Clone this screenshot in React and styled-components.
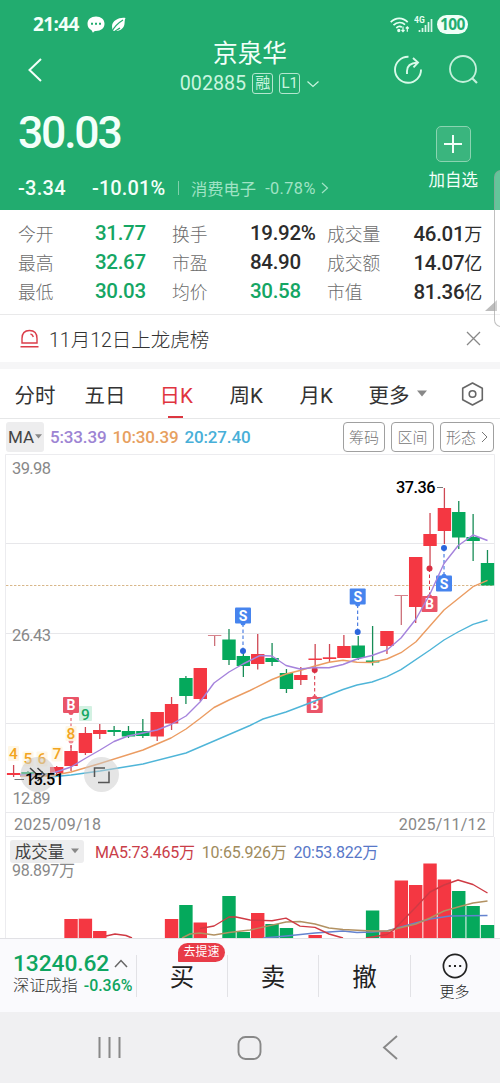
import React from 'react';
import styled, { createGlobalStyle } from 'styled-components';

const RED = '#f43742';
const GREEN = '#05a95c';

const Global = createGlobalStyle`
  * { box-sizing: border-box; }
  body {
    margin: 0;
    background: #fff;
    font-family: Roboto, "Noto Sans CJK SC", sans-serif;
    color: #333;
  }
  svg { display: block; flex: none; }
`;

const Screen = styled.div`
  position: relative;
  width: 500px;
  height: 1083px;
  display: flex;
  flex-direction: column;
  overflow: hidden;
  background: #fff;
  white-space: nowrap;
`;

const Header = styled.header`
  height: 210px;
  flex: none;
  background: #22ac6f;
  color: #f3fff9;
`;

const StatusBar = styled.div`
  height: 38px;
  padding: 12px 32px 0 33px;
  display: flex;
  align-items: flex-start;
  justify-content: space-between;
`;

const StatusGroup = styled.div`
  display: flex;
  align-items: center;
  height: 25px;
  gap: ${(p) => p.$gap}px;
`;

const Clock = styled.span`
  font: 700 19px/25px "Open Sans", sans-serif;
  letter-spacing: -0.6px;
  margin-right: 2px;
`;

const Battery = styled.span`
  width: 31px;
  height: 19px;
  border-radius: 10px;
  background: #effff7;
  color: #22ac6f;
  font: 700 15.5px/19px "Open Sans", sans-serif;
  letter-spacing: -0.6px;
  text-align: center;
`;

const TitleBar = styled.div`
  height: 62px;
  display: grid;
  grid-template-columns: 148px 1fr 148px;
`;

const BackSlot = styled.div`
  padding: 19px 0 0 26px;
`;

const TitleBlock = styled.div`
  display: flex;
  flex-direction: column;
  align-items: center;
`;

const StockName = styled.h1`
  margin: 0;
  padding-top: 1px;
  font-size: 24.7px;
  font-weight: 400;
  line-height: 30px;
`;

const CodeRow = styled.div`
  display: flex;
  align-items: center;
  gap: 6px;
  height: 29px;
  font-size: 19.7px;
  color: #c9f5df;
`;

const Tag = styled.span`
  width: 21px;
  height: 21px;
  border: 1px solid #b4e6cf;
  border-radius: 3px;
  font-size: 15px;
  line-height: 19px;
  display: flex;
  justify-content: center;
`;

const TitleActions = styled.div`
  display: flex;
  gap: 26px;
  padding: 17px 0 0 41px;
`;

const PriceArea = styled.div`
  display: flex;
  justify-content: space-between;
  height: 110px;
  padding: 8px 22px 0 18px;
`;

const PriceBlock = styled.div`
  display: flex;
  flex-direction: column;
`;

const Price = styled.div`
  font-size: 44.5px;
  font-weight: 500;
  line-height: 50px;
  letter-spacing: -2.2px;
`;

const ChangeRow = styled.div`
  display: flex;
  align-items: center;
  height: 24px;
  margin-top: 18px;
  font-size: 20px;
  font-weight: 500;
`;

const Change = styled.span`
  width: ${(p) => p.$w}px;
  letter-spacing: ${(p) => p.$ls}px;
`;

const Sector = styled.span`
  display: flex;
  align-items: center;
  height: 14px;
  padding-left: 12px;
  border-left: 1px solid #7fd0ab;
  color: #a0e3c5;
  font-size: 16.3px;
  font-weight: 400;
  gap: 9px;
`;

const SectorPct = styled.span`
  display: flex;
  align-items: center;
  gap: 5px;
  letter-spacing: 0.4px;
`;

const AddWatch = styled.div`
  display: flex;
  flex-direction: column;
  align-items: center;
  gap: 7px;
  padding-top: 18px;
  font-size: 16.5px;
  line-height: 24px;
`;

const AddBox = styled.div`
  width: 35px;
  height: 36px;
  border: 1px solid #8bd4b1;
  border-radius: 5px;
  background: #3ab57e;
  display: flex;
  align-items: center;
  justify-content: center;
`;

const Stats = styled.section`
  height: 105px;
  flex: none;
  padding: 8px 18px 0 18px;
  display: grid;
  grid-template-columns: 77px 77px 78px 77px 53px 102px;
  grid-auto-rows: 29.3px;
  align-items: center;
  border-bottom: 1px solid #e9e9ea;
`;

const StatLabel = styled.span`
  font-size: 17.8px;
  font-weight: 300;
  color: #6c6c6c;
`;

const StatValue = styled.span`
  font-size: 20.5px;
  font-weight: 500;
  letter-spacing: -0.3px;
  color: ${(p) => (p.$up ? '#15a664' : '#2c2c2c')};
  text-align: ${(p) => (p.$end ? 'right' : 'left')};
`;

const Unit = styled.span`
  font-size: 18px;
  font-weight: 400;
`;

const Notice = styled.section`
  height: 47px;
  flex: none;
  display: flex;
  align-items: center;
  padding: 0 19px 0 20px;
`;

const NoticeText = styled.span`
  flex: 1;
  margin-left: 10px;
  font-size: 19.5px;
  font-weight: 300;
  color: #333;
`;

const Gap = styled.div`
  height: 7px;
  flex: none;
  background: #f6f6f7;
`;

const Tabs = styled.nav`
  height: 50px;
  flex: none;
  display: grid;
  grid-template-columns: 70px 75px 70px 70px 69px 92px 24px;
  padding-left: 14.5px;
  border-bottom: 1px solid #e6e7e8;
`;

const Tab = styled.div`
  display: flex;
  align-items: center;
  gap: 7px;
  height: 49px;
  font-size: 20.5px;
  color: ${(p) => (p.$active ? '#e0343f' : '#333')};
`;

const ActiveTab = styled(Tab)`
  width: 34px;
  background: linear-gradient(#dc3640, #dc3640) 8px 47px / 15px 2px no-repeat;
`;

const MaRow = styled.div`
  height: 35px;
  flex: none;
  display: flex;
  align-items: center;
  padding: 0 6px;
`;

const Picker = styled.div`
  height: ${(p) => p.$h}px;
  width: ${(p) => p.$w}px;
  border-radius: 3px;
  background: #ededee;
  display: flex;
  align-items: center;
  justify-content: center;
  gap: ${(p) => p.$gap}px;
  font-size: ${(p) => p.$size}px;
  color: #444;
`;

const MaList = styled.div`
  flex: 1;
  display: flex;
  gap: 6px;
  padding-left: 6px;
  font-size: 17px;
  font-weight: 500;
  letter-spacing: -0.15px;
`;

const MaValue = styled.span`
  color: ${(p) => p.$c};
`;

const ToolButtons = styled.div`
  display: flex;
  gap: 6px;
`;

const ToolButton = styled.div`
  height: 30px;
  width: ${(p) => p.$w}px;
  border: 1px solid #a0a0a0;
  border-radius: 4px;
  display: flex;
  align-items: center;
  justify-content: center;
  gap: 5px;
  font-size: 15px;
  font-weight: 300;
  color: #777;
`;

const Dates = styled.div`
  height: 25px;
  flex: none;
  margin: 0 6px 0 5px;
  padding: 0 7px 0 8px;
  display: flex;
  align-items: center;
  justify-content: space-between;
  border: 1px solid #e9e9ec;
  font-size: 16px;
  letter-spacing: 0.2px;
  color: #888;
`;

const VolumePanel = styled.section`
  height: 101px;
  flex: none;
  display: flex;
  flex-direction: column;
`;

const VolumeHead = styled.div`
  display: flex;
  align-items: center;
  height: 25px;
  padding: 3px 0 0 10px;
`;

const VolumeMas = styled.div`
  display: flex;
  gap: 7px;
  padding-left: 11px;
  font-size: 16px;
  letter-spacing: -0.25px;
`;

const VolumeSvg = styled.svg`
  overflow: visible;
`;

const TradeBar = styled.section`
  position: relative;
  height: 74px;
  flex: none;
  display: grid;
  grid-template-columns: 136px 91px 91px 92px 90px;
  align-items: center;
  background: #fafafd;
  border-top: 1px solid #e1e1e5;
`;

const IndexCell = styled.div`
  height: 52px;
  padding: 2px 0 0 13px;
  display: flex;
  flex-direction: column;
`;

const IndexValue = styled.div`
  display: flex;
  align-items: center;
  gap: 5px;
  font-size: 22.8px;
  font-weight: 500;
  line-height: 24px;
  letter-spacing: -0.1px;
  color: #0fa561;
`;

const IndexName = styled.div`
  display: flex;
  align-items: center;
  gap: 6px;
  font-size: 16.2px;
  line-height: 20px;
  font-weight: 300;
  color: #333;
`;

const IndexPct = styled.span`
  font-size: 15.9px;
  font-weight: 500;
  color: #0fa561;
`;

const TradeCell = styled.div`
  position: relative;
  height: 42px;
  display: flex;
  align-items: center;
  justify-content: center;
  border-left: 1px solid #e2e2e6;
  font-size: 24.5px;
  color: #222;
`;

const Promo = styled.span`
  position: absolute;
  left: 41px;
  top: -12px;
  width: 47px;
  height: 19px;
  border-radius: 10px 10px 10px 1px;
  background: #e83c48;
  color: #fff;
  font-size: 12px;
  line-height: 18px;
  text-align: center;
`;

const MoreCell = styled(TradeCell)`
  flex-direction: column;
  gap: 3px;
  padding: 3px 2px 0 0;
  font-size: 15px;
  line-height: 20px;
  font-weight: 300;
`;

const SystemNav = styled.footer`
  flex: 1;
  background: #f0f0f2;
  display: grid;
  grid-template-columns: 219px 61px 220px;
  align-items: center;
  justify-items: center;
`;

const EdgePanel = styled.div`
  position: absolute;
  left: 494px;
  top: 170px;
  width: 20px;
  height: 157px;
  border: 1px solid rgba(150, 150, 150, 0.6);
  border-radius: 7px;
  background: rgba(255, 255, 255, 0.3);
`;

const CornerMark = styled.svg`
  position: absolute;
  left: 485px;
  top: 300px;
`;

const Stroke = ({ w, h, d, c = 'currentColor', sw = 1.5 }) => (
  <svg width={w} height={h} viewBox={`0 0 ${w} ${h}`} fill="none" stroke={c} strokeWidth={sw}>
    <path d={d} />
  </svg>
);

const Caret = ({ w = 11, c = '#888' }) => (
  <svg width={w} height={w * 0.65} viewBox="0 0 11 7"><path d="M0 .5h11L5.5 7z" fill={c} /></svg>
);

const stats = [
  ['今开', '31.77', true, '换手', '19.92%', false, '成交量', '46.01', '万'],
  ['最高', '32.67', true, '市盈', '84.90', false, '成交额', '14.07', '亿'],
  ['最低', '30.03', true, '均价', '30.58', true, '市值', '81.36', '亿'],
];

const STEP = 14.36;
const cx = (i) => 13.6 + STEP * i;

// [body top, body bottom, high, low, kind]: 0 falling, 1 rising, 2 flat at limit
const candles = [
  [773, 775, 765, 777, 1], [772, 775, 771, 776, 0], [773, 776, 771, 777, 0], [767, 773, 766, 774, 1],
  [751, 766, 745, 771, 1], [733, 753, 727, 755, 1], [730, 734, 724, 739, 1], [730, 732, 726, 736, 0],
  [731, 736.5, 726, 738, 0], [731, 736, 719, 738, 0], [712, 736.5, 712, 741, 1], [704, 723.5, 697, 730, 1],
  [678, 696, 676, 704, 0], [668, 699, 668, 701, 1], [635, 636, 635, 646, 2], [639.5, 660, 629, 665, 0],
  [656, 666, 652, 677, 0], [654, 664, 634, 669.5, 1], [658, 662, 643, 666, 0], [673, 689, 669, 693, 0],
  [675, 680, 667, 685, 1], [658.5, 660, 644, 668, 1], [657.3, 659, 644, 662, 1], [646, 658, 635, 658, 1],
  [645.5, 658, 636, 660, 0], [660.5, 662.5, 626, 665.5, 0], [631, 646, 631, 654, 1], [595, 596, 595, 625, 2],
  [557, 607, 557, 623, 1], [534, 546, 513, 568, 1], [508, 531, 488, 544, 1], [512, 537.5, 501, 549, 0],
  [537, 541, 514, 561, 0], [563, 585.5, 550, 585, 0],
];

const ma5 = '20,775 50,774 71,767 86,758 100,750 114,741.5 128,736 143,733 157,730 171,724.5 186,716 200,702 214,683 229,672 243,664 250,660.5 260,655.5 272,656 286,665.5 300,669 315,667.5 329,667.7 343,664.5 357,659 372,655.5 387,650 401,638 416,619 430,594 444,563.5 458,545.7 473,535 487.5,540.5';
const ma10 = '20,776 50,776 71,772 100,763.5 143,750 171,738 186,729 200,718.5 214,707.5 229,700 250,690.5 272,679.5 286,674 300,670.5 315,666 329,662.3 343,660.3 357,662.3 372,662.5 387,659 401,652.7 416,641.7 444,610 473,586.7 487.5,580.3';
const ma20 = '50,777 71,775 100,771 143,764 186,753 214,741 250,725.5 263,719 286,712 315,701 329,695 343,689.5 357,685 372,682 387,676.7 401,669.7 430,650 444,640 458,632 473,624.3 487.5,620';

// trade marks: [x, label top, dot y, letter]
const marks = [
  [71, 697, null, 'B'],
  [243, 607.5, 651, 'S'],
  [357.7, 588.5, 632, 'S'],
  [314.7, 697, 670, 'B'],
  [429.5, 596, 568.5, 'B'],
  [444, 575.5, 548, 'S'],
];

const counts = [[13.5, 753, '4'], [28, 758.5, '5'], [42, 758.5, '6'], [57, 753.5, '7'], [71, 733, '8']];

const volumes = {
  4: [919, 1], 5: [918.7, 1], 6: [931, 1], 11: [919, 1], 12: [905, 0], 13: [922.5, 1], 15: [896, 0],
  16: [932, 0], 17: [913, 1], 18: [924, 0], 19: [928, 0], 21: [935, 1], 25: [910.5, 0], 26: [931.5, 1],
  27: [880.5, 1], 28: [885, 1], 29: [863.5, 1], 30: [879.5, 1], 31: [891, 0], 32: [906, 0], 33: [925, 0],
};

const Mark = ({ x, top, dot, letter }) => {
  const fill = letter === 'B' ? '#ea5468' : '#4684ee';
  const ink = letter === 'B' ? '#d92f42' : '#2b66dc';
  const below = dot !== null && dot < top;
  return (
    <g>
      {dot !== null && (
        <>
          <path d={`M${x} ${dot}V${below ? top : top + 16}`} stroke={ink} strokeDasharray="3.5 2.5" />
          <circle cx={x} cy={dot} r="3" fill={ink} />
        </>
      )}
      <circle cx={x} cy={below ? top + 0.8 : top + 15.4} r="2.5" fill={fill} />
      <rect x={x - 8} y={top} width="16" height="16" rx="1" fill={fill} />
      <text x={x} y={top + 13} fontSize="14" fontWeight="700" fill="#fff" textAnchor="middle">{letter}</text>
    </g>
  );
};

const PriceChart = () => (
  <svg width="500" height="358" viewBox="0 454 500 358" fontFamily="Roboto, sans-serif">
    <path d="M5.5 812V454.5H494.5V812" fill="none" stroke="#ececef" />
    <path d="M6 543.5H494M6 633.5H494M6 723.5H494" stroke="#e7e7ea" />
    <path d="M6 585.5H494" stroke="#d8b78a" strokeDasharray="2.4 1.6" />
    {candles.map(([t, b, h, l, k], i) => {
      const c = k === 0 ? GREEN : k === 1 ? RED : '#d6838c';
      const wick = k === 0 ? '#178c56' : k === 1 ? '#cf4854' : '#cc7079';
      return (
        <g key={i}>
          <path d={`M${cx(i)} ${h}V${l}`} stroke={wick} strokeWidth="1.3" />
          <rect x={cx(i) - 6.7} y={t} width="13.4" height={b - t} fill={c} />
        </g>
      );
    })}
    <g fontSize="16.5" fill="#888">
      <text x="12" y="474" textLength="39">39.98</text>
      <text x="12" y="640.5" textLength="39">26.43</text>
      <text x="12.5" y="804" textLength="38">12.89</text>
    </g>
    <path d="M71 718V748" stroke="#e0485a" strokeDasharray="3 2.5" />
    <circle cx="71" cy="741" r="2.5" fill="#f08b92" />
    <g fontSize="15.5" fontWeight="500" fill="#f2a51f" textAnchor="middle">
      {counts.map(([x, y, n]) => (
        <React.Fragment key={n}>
          <rect x={x - 5.5} y={y - 7} width="11" height="15" rx="1" fill="#fff6e2" fillOpacity="0.85" />
          <text x={x} y={y + 5.5}>{n}</text>
        </React.Fragment>
      ))}
    </g>
    <rect x="79" y="706" width="13" height="15" rx="1" fill="#d3f1e2" />
    <text x="85.3" y="719.5" fontSize="15.5" fontWeight="500" fill="#16a863" textAnchor="middle">9</text>
    {marks.map(([x, top, dot, letter], i) => <Mark key={i} x={x} top={top} dot={dot} letter={letter} />)}
    <g fill="none" strokeWidth="1.4" strokeLinejoin="round">
      <polyline points={ma20} stroke="#4fb5d8" />
      <polyline points={ma10} stroke="#eb9c62" />
      <polyline points={ma5} stroke="#a583dc" />
    </g>
    <circle cx="38" cy="774.5" r="17.5" fill="#ccc" fillOpacity="0.55" />
    <circle cx="101.5" cy="774.5" r="17.5" fill="#ccc" fillOpacity="0.5" />
    <path d="M30 768l7 6.5-7 6.5M37.5 768l7 6.5-7 6.5" fill="none" stroke="#444" strokeWidth="1.5" />
    <path d="M94.5 777v-9H105M98 782.5h11v-11" fill="none" stroke="#555" strokeWidth="1.5" />
    <path d="M14.5 779.5H24M437 487.5H443" stroke="#777" />
    <g fontSize="16.3" fill="#000" fontWeight="500">
      <text x="25" y="784.5" textLength="39">15.51</text>
      <text x="396" y="492.5" textLength="39.5">37.36</text>
    </g>
  </svg>
);

const VolumeChart = () => (
  <VolumeSvg width="500" height="76" viewBox="0 862 500 76" fontFamily='Roboto, "Noto Sans CJK SC", sans-serif'>
    <path d="M5.5 837V938M494.5 837V938" stroke="#ececef" />
    <text x="12" y="876" fontSize="16" fill="#888" textLength="63">98.897万</text>
    {Object.entries(volumes).map(([i, [top, up]]) => (
      <rect key={i} x={cx(Number(i)) - 6.7} y={top} width="13.4" height={938 - top} fill={up ? RED : GREEN} />
    ))}
    <g fill="none" strokeWidth="1.4" strokeLinejoin="round">
      <polyline points="263,938 286,936 315,933 343,931 357,932.5 372,932 387,931 401,927 430,919 450,916 487.5,915.5" stroke="#6483cf" />
      <polyline points="182,938 190,934 200,933 214,935 229,932.5 250,930 286,922 300,921.5 315,924 329,928 343,929.5 372,931 387,931 416,924 430,918 444,911 458,907 473,903 487.5,901" stroke="#b29162" />
      <path d="M106 936l9-2 11 1.5 6 2.5M200 928.500L214 926l15-9h7l14 3 22 .7 14-2.600 14 8 15 1.300 14 6.600 14 4M366 938l21-3.500 6-4 23-23.500 14-15 14-7 14-5 15 4.500 14.500 8.500" stroke="#cf3a44" />
    </g>
  </VolumeSvg>
);

export default function App() {
  return (
    <Screen>
      <Global />
      <Header>
        <StatusBar>
          <StatusGroup $gap={6}>
            <Clock>21:44</Clock>
            <svg width="18" height="17" viewBox="0 0 18 17">
              <path d="M9 .5c5 0 8.5 3 8.5 7.3S14 15 9 15c-1 0-2 0-3 1.7-.8-1-1-2-1.500-2.500C2 13 .5 11 .5 7.800.5 3.500 4 .5 9 .5z" fill="#fff" />
              <path d="M4 7.700h2M8 7.700h2M12 7.700h2" stroke="#22ac6f" strokeWidth="2" />
            </svg>
            <svg width="15" height="16" viewBox="0 0 15 16">
              <path d="M14.500 1C9 0 1.500 3 1 9c0 2 .5 4 1.500 5C7 14.500 12 13 13.300 8c.6-2.500 0-4.500 1.200-7z" fill="#fff" />
              <path d="M0 16C3 10 7 6 12 3M3 15c1.500-2 4-2.500 6-4" stroke="#22ac6f" strokeWidth="1.200" fill="none" />
            </svg>
          </StatusGroup>
          <StatusGroup $gap={4}>
            <svg width="20" height="16" viewBox="0 0 20 16" fill="none" stroke="#e5fff2" strokeWidth="1.700">
              <path d="M.7 5.200c5-5 12-5 17 0M3.500 8.200c3.500-3.500 8.500-3.500 11.500-.5M6.300 11c2-1.800 4-1.800 5.500-.8" />
              <circle cx="8.800" cy="13.500" r=".8" />
              <path d="M13 9.500v5M11.500 13l1.500 1.700 1.500-1.700M17.300 14.800V10M15.800 11.500l1.500-1.700 1.500 1.700" strokeWidth="1.200" />
            </svg>
            <svg width="19" height="17" viewBox="0 0 19 17">
              <text x="0" y="7" fontSize="8.500" fontWeight="700" fontFamily="Roboto, sans-serif" fill="#e5fff2">4G</text>
              <path d="M5.500 16v-2M8.500 16v-4M11.500 16V9M14.500 16V6M17.500 16V3" stroke="#d8f7e8" strokeWidth="1.700" />
            </svg>
            <Battery>100</Battery>
          </StatusGroup>
        </StatusBar>
        <TitleBar>
          <BackSlot><Stroke w={17} h={26} d="M15 2L3.500 13 15 24" sw={2} /></BackSlot>
          <TitleBlock>
            <StockName>京泉华</StockName>
            <CodeRow>
              <span>002885</span>
              <Tag>融</Tag>
              <Tag>L1</Tag>
              <Stroke w={14} h={8} d="M1.500 1.500L7 6.500l5.500-5" sw={1.200} />
            </CodeRow>
          </TitleBlock>
          <TitleActions>
            <svg width="30" height="30" viewBox="0 0 30 30" fill="none" stroke="#d8fae9" strokeWidth="1.900">
              <path d="M15.500 1.800A13 13 0 1 0 28 14.500" />
              <path d="M14 19v-3c0-6 4-8 10.500-8.500M20 3l5 4.500-4.500 4.800" />
            </svg>
            <svg width="32" height="30" viewBox="0 0 32 30" fill="none" stroke="#c4f0db" strokeWidth="1.800">
              <circle cx="14" cy="14" r="13" />
              <path d="M23 23l5 5" strokeWidth="2.200" />
            </svg>
          </TitleActions>
        </TitleBar>
        <PriceArea>
          <PriceBlock>
            <Price>30.03</Price>
            <ChangeRow>
              <Change $w={74} $ls={0.3}>-3.34</Change>
              <Change $w={86} $ls={0.1}>-10.01%</Change>
              <Sector>
                消费电子
                <SectorPct>-0.78%<Stroke w={8} h={12} d="M1 1l5.500 5L1 11" sw={1.200} /></SectorPct>
              </Sector>
            </ChangeRow>
          </PriceBlock>
          <AddWatch>
            <AddBox><Stroke w={18} h={18} d="M9 0v18M0 9h18" sw={2} /></AddBox>
            加自选
          </AddWatch>
        </PriceArea>
      </Header>

      <Stats>
        {stats.map(([l1, v1, u1, l2, v2, u2, l3, v3, unit]) => (
          <React.Fragment key={l1}>
            <StatLabel>{l1}</StatLabel>
            <StatValue $up={u1}>{v1}</StatValue>
            <StatLabel>{l2}</StatLabel>
            <StatValue $up={u2}>{v2}</StatValue>
            <StatLabel>{l3}</StatLabel>
            <StatValue $end>{v3}<Unit>{unit}</Unit></StatValue>
          </React.Fragment>
        ))}
      </Stats>

      <Notice>
        <Stroke w={19} h={19} c="#db3d49" sw={1.400} d="M2 14V9.500C2 4 5 1.500 9.500 1.500S17 4 17 9.500V14zM.5 17.800h18M10.500 5c1.500.3 2.500 1.500 2.800 3" />
        <NoticeText>11月12日上龙虎榜</NoticeText>
        <Stroke w={15} h={15} c="#888" sw={1.300} d="M1 1l13 13M14 1L1 14" />
      </Notice>
      <Gap />

      <Tabs>
        <Tab>分时</Tab>
        <Tab>五日</Tab>
        <ActiveTab $active>日K</ActiveTab>
        <Tab>周K</Tab>
        <Tab>月K</Tab>
        <Tab>更多<Caret w={10} /></Tab>
        <Tab>
          <svg width="23" height="24" viewBox="0 0 23 24" fill="none" stroke="#666" strokeWidth="1.600" strokeLinejoin="round">
            <path d="M11.500 1l9.800 5.300v11.400L11.500 23l-9.800-5.300V6.300z" />
            <circle cx="11.500" cy="12" r="3.300" />
          </svg>
        </Tab>
      </Tabs>

      <MaRow>
        <Picker $w={38} $h={30} $gap={1} $size={17}>MA<Caret w={7} /></Picker>
        <MaList>
          <MaValue $c="#9d84d3">5:33.39</MaValue>
          <MaValue $c="#e7a05f">10:30.39</MaValue>
          <MaValue $c="#48afd8">20:27.40</MaValue>
        </MaList>
        <ToolButtons>
          <ToolButton $w={42}>筹码</ToolButton>
          <ToolButton $w={43}>区间</ToolButton>
          <ToolButton $w={54}>形态<Stroke w={7} h={12} d="M1 1l5 5-5 5" sw={1} /></ToolButton>
        </ToolButtons>
      </MaRow>

      <PriceChart />
      <Dates><span>2025/09/18</span><span>2025/11/12</span></Dates>

      <VolumePanel>
        <VolumeHead>
          <Picker $w={74} $h={23} $gap={7} $size={16.5}>成交量<Caret w={8} /></Picker>
          <VolumeMas>
            <MaValue $c="#c93d48">MA5:73.465万</MaValue>
            <MaValue $c="#a08b5c">10:65.926万</MaValue>
            <MaValue $c="#5878c8">20:53.822万</MaValue>
          </VolumeMas>
        </VolumeHead>
        <VolumeChart />
      </VolumePanel>

      <TradeBar>
        <IndexCell>
          <IndexValue>13240.62<Stroke w={14} h={9} c="#666" d="M1 8l6-6.500L13 8" sw={1.500} /></IndexValue>
          <IndexName>深证成指<IndexPct>-0.36%</IndexPct></IndexName>
        </IndexCell>
        <TradeCell>买<Promo>去提速</Promo></TradeCell>
        <TradeCell>卖</TradeCell>
        <TradeCell>撤</TradeCell>
        <MoreCell>
          <svg width="26" height="26" viewBox="0 0 26 26">
            <circle cx="13" cy="13" r="11.600" fill="none" stroke="#222" strokeWidth="1.700" />
            <path d="M6.800 13h2M12 13h2M17.200 13h2" stroke="#222" strokeWidth="1.800" />
          </svg>
          更多
        </MoreCell>
      </TradeBar>

      <SystemNav>
        <Stroke w={23} h={23} c="#888" sw={2} d="M1.500 1v21M11.500 1v21M21.500 1v21" />
        <svg width="25" height="24" viewBox="0 0 25 24"><rect x="1.500" y="1" width="22" height="22" rx="7" fill="none" stroke="#888" strokeWidth="1.900" /></svg>
        <Stroke w={16} h={25} c="#888" sw={1.900} d="M15 1L2 12.500 15 24" />
      </SystemNav>

      <CornerMark width="12" height="12" viewBox="0 0 12 12"><path d="M12 0v11H0z" fill="#bcbcbc" /></CornerMark>
      <EdgePanel />
    </Screen>
  );
}
